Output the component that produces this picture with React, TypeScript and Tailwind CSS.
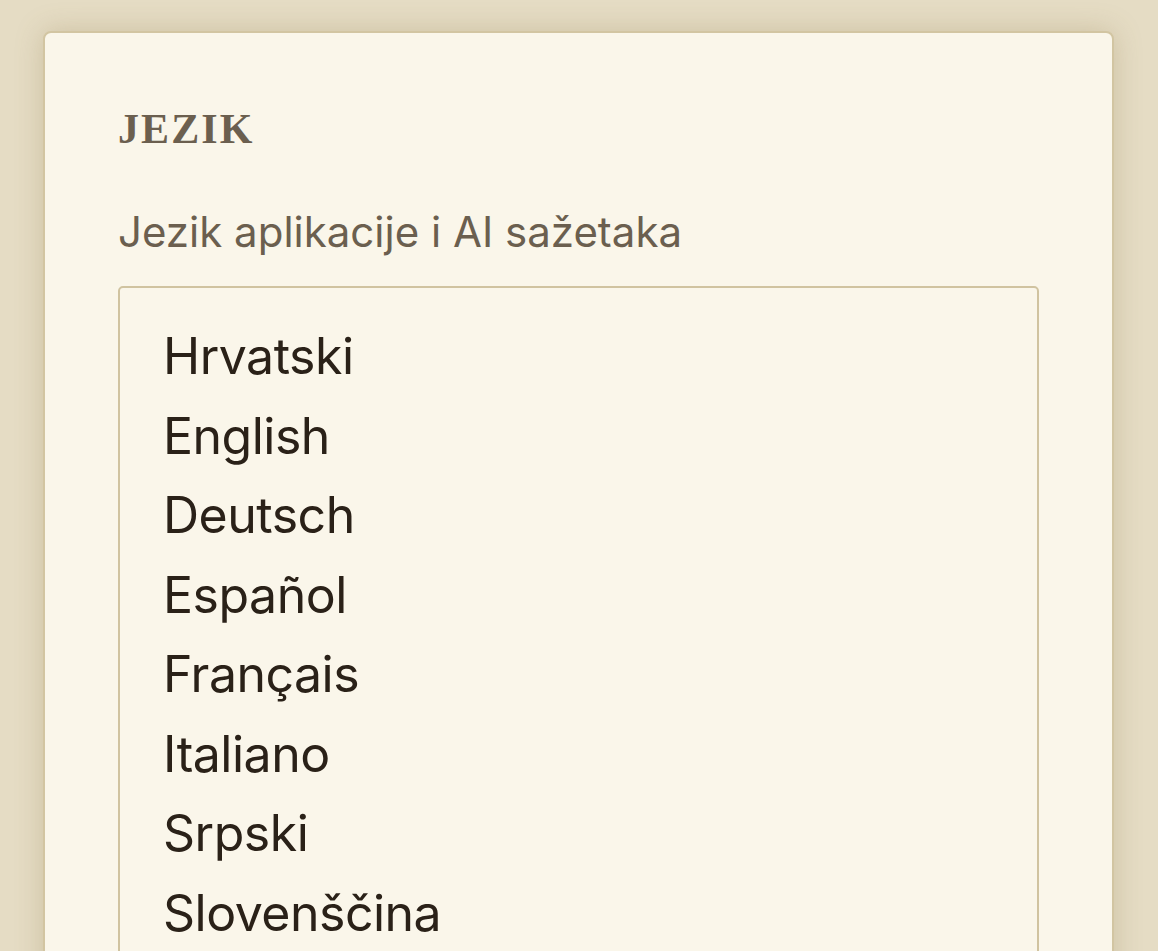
const languages = [
  "Hrvatski",
  "English",
  "Deutsch",
  "Español",
  "Français",
  "Italiano",
  "Srpski",
  "Slovenščina",
];

const App = () => {
  return (
    <div className="h-[951px] overflow-hidden bg-[#e5dcc4] pt-[31px] pl-[43px] pr-[44px]">
      {/* Card */}
      <div className="rounded-[8px] border-2 border-[#d2c5a2] bg-[#faf6ea] px-[73px] pt-[74px] pb-16 shadow-[0_0_28px_rgba(140,120,70,0.28)]">
        <h2 className="text-[42px] leading-[44px] font-bold tracking-[0.05em] text-[#6b5f4f] font-['Liberation_Serif',serif]">
          JEZIK
        </h2>

        <p className="mt-[56px] text-[42px] leading-[49px] text-[#6b5f4f] font-['Inter',sans-serif]">
          Jezik aplikacije i AI sažetaka
        </p>

        {/* Language list */}
        <div className="mt-[30px] rounded-[5px] border-2 border-[#d0c3a0] bg-[#faf6ea] pt-[29px] pb-24 pl-[43px]">
          {languages.map((l) => (
            <div
              key={l}
              className="text-[50px] leading-[79.5px] tracking-[-0.01em] text-[#2a2118] font-['Inter',sans-serif]"
            >
              {l}
            </div>
          ))}
        </div>
      </div>
    </div>
  );
};

export default App;
